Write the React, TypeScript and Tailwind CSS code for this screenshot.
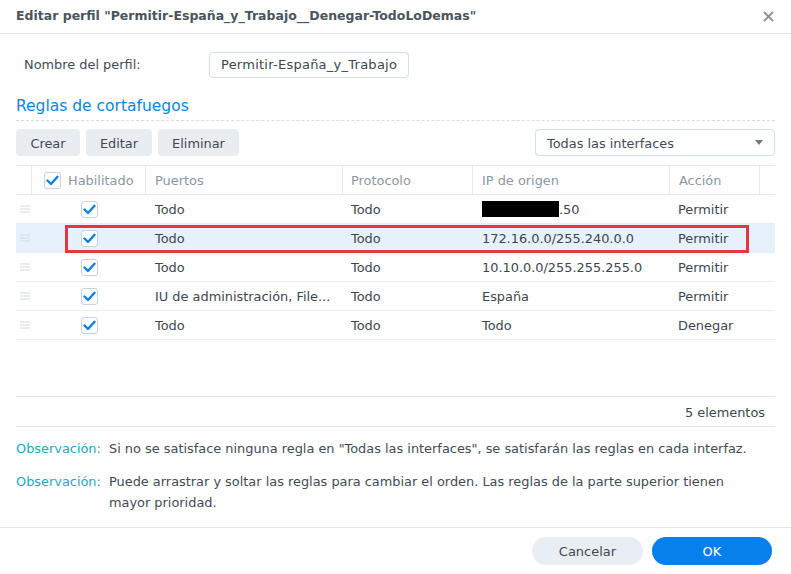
import React from "react";

const font = { fontFamily: '"DejaVu Sans", Verdana, sans-serif' };

function Check() {
  return (
    <span className="inline-flex h-[17px] w-[17px] items-center justify-center rounded-[3px] border border-[#c9d3de] bg-white">
      <svg width="13" height="11" viewBox="0 0 13 11">
        <path d="M1.5 5.5 L5 9 L11.5 1.8" fill="none" stroke="#0a7fe6" strokeWidth="2.4" strokeLinecap="round" strokeLinejoin="round" />
      </svg>
    </span>
  );
}

function Handle() {
  return (
    <svg width="10" height="8" viewBox="0 0 10 8">
      <path d="M0 1h10M0 4h10M0 7h10" stroke="#d3dae2" strokeWidth="1" />
    </svg>
  );
}

const rows = [
  { p: "Todo", pr: "Todo", ip: "redacted", a: "Permitir" },
  { p: "Todo", pr: "Todo", ip: "172.16.0.0/255.240.0.0", a: "Permitir", sel: true },
  { p: "Todo", pr: "Todo", ip: "10.10.0.0/255.255.255.0", a: "Permitir" },
  { p: "IU de administración, File...", pr: "Todo", ip: "España", a: "Permitir" },
  { p: "Todo", pr: "Todo", ip: "Todo", a: "Denegar" },
];

export default function App() {
  return (
    <div className="w-[791px] h-[574px] bg-white text-[12.9px] text-[#414b55] flex flex-col" style={font}>
      {/* title bar */}
      <div className="h-[34px] flex items-center justify-between pl-[16px] pr-[16px] border-b border-[#e3e8ee]">
        <span className="font-bold text-[12.5px] text-[#4a545e]">Editar perfil "Permitir-España_y_Trabajo__Denegar-TodoLoDemas"</span>
        <svg width="11" height="11" viewBox="0 0 11 11" className="mr-[1px]">
          <path d="M1 1L10 10M10 1L1 10" stroke="#8a939c" strokeWidth="1.8" />
        </svg>
      </div>

      <div className="flex-1 px-[16px] flex flex-col">
        {/* profile name */}
        <div className="flex items-center mt-[18px] h-[26px]">
          <span className="pl-[8px] w-[193px]">Nombre del perfil:</span>
          <div className="h-[26px] w-[200px] border border-[#d5dde6] rounded-[4px] flex items-center px-[11px] text-[#3c4650] text-[13px] tracking-[0.25px] whitespace-nowrap">
            Permitir-España_y_Trabajo
          </div>
        </div>

        <div className="mt-[18px] text-[15.5px] text-[#0a86e0] leading-[20px]">Reglas de cortafuegos</div>
        <div className="mt-[4px] border-b border-dashed border-[#d7dee6]" />

        {/* toolbar */}
        <div className="mt-[8px] flex items-center h-[27px]">
          <button className="h-[27px] w-[64px] pt-[2px] rounded-[4px] bg-[#e9edf2] text-[#3f4953]">Crear</button>
          <button className="ml-[6px] h-[27px] w-[66px] pt-[2px] rounded-[4px] bg-[#e9edf2] text-[#3f4953]">Editar</button>
          <button className="ml-[6px] h-[27px] w-[81px] pt-[2px] rounded-[4px] bg-[#e9edf2] text-[#3f4953]">Eliminar</button>
          <div className="ml-auto h-[27px] w-[240px] border border-[#d5dde6] rounded-[4px] flex items-center pl-[11px] pr-[11px] justify-between">
            <span className="pt-[2px]">Todas las interfaces</span>
            <svg width="8" height="5" viewBox="0 0 8 5"><path d="M0 0h8L4 5z" fill="#6f7882" /></svg>
          </div>
        </div>

        {/* table */}
        <div className="mt-[9px] border-t border-[#e3e8ee] w-[759px]">
          <div className="flex h-[29px] border-b border-[#e3e8ee] text-[#8b97a3]">
            <div className="w-[16px] border-r border-[#e6eaef]" />
            <div className="w-[114px] border-r border-[#e6eaef] flex items-center pl-[12px] gap-[7px]">
              <Check />
              <span className="pt-[2px]">Habilitado</span>
            </div>
            <div className="w-[197px] border-r border-[#e6eaef] flex items-center pl-[9px] pt-[2px]">Puertos</div>
            <div className="w-[130px] border-r border-[#e6eaef] flex items-center pl-[8px] pt-[2px]">Protocolo</div>
            <div className="w-[197px] border-r border-[#e6eaef] flex items-center pl-[9px] pt-[2px]">IP de origen</div>
            <div className="w-[90px] border-r border-[#e6eaef] flex items-center pl-[9px] pt-[2px]">Acción</div>
            <div className="flex-1" />
          </div>
          {rows.map((r, i) => (
            <div key={i} className={`relative flex h-[29px] border-b border-[#e8ecf0] ${r.sel ? "bg-[#e6f1fc]" : ""}`}>
              <div className="w-[16px] flex items-center justify-center pl-[2px]"><Handle /></div>
              <div className="w-[114px] flex items-center justify-center"><Check /></div>
              <div className="w-[197px] flex items-center pl-[9px] pt-[2px] text-[#3c4650] whitespace-nowrap">{r.p}</div>
              <div className="w-[130px] flex items-center pl-[8px] pt-[2px] text-[#3c4650]">{r.pr}</div>
              <div className="w-[197px] flex items-center pl-[9px] text-[#3c4650] whitespace-nowrap">
                {r.ip === "redacted" ? (
                  <>
                    <span className="inline-block w-[77px] h-[16px] bg-black" />
                    <span className="pt-[2px]">.50</span>
                  </>
                ) : (
                  <span className="pt-[2px]">{r.ip}</span>
                )}
              </div>
              <div className="w-[90px] flex items-center pl-[8px] pt-[2px] text-[#3c4650]">{r.a}</div>
              <div className="flex-1" />
              {r.sel && (
                <div className="absolute left-[49px] top-[1px] w-[684px] h-[28px] border-[3px] border-[#e8343c] pointer-events-none" />
              )}
            </div>
          ))}
          <div className="h-[57px] border-b border-[#dfe5eb]" />
          <div className="h-[29px] flex items-center justify-end pr-[10px] pt-[2px] text-[#3c4650]">5 elementos</div>
        </div>

        <div className="border-t border-[#dfe5eb] w-[759px]" />
        <div className="mt-[12px] flex leading-[20px] whitespace-nowrap">
          <span className="text-[#1fa6c1] w-[93px] shrink-0">Observación:</span>
          <span>Si no se satisface ninguna regla en "Todas las interfaces", se satisfarán las reglas en cada interfaz.</span>
        </div>
        <div className="mt-[12px] flex leading-[21px]">
          <span className="text-[#1fa6c1] w-[93px] shrink-0">Observación:</span>
          <span className="w-[655px]">Puede arrastrar y soltar las reglas para cambiar el orden. Las reglas de la parte superior tienen mayor prioridad.</span>
        </div>
      </div>

      {/* footer */}
      <div className="h-[47px] border-t border-[#e3e8ee] flex items-start justify-end pt-[9px] pr-[19px] gap-[9px]">
        <button className="h-[28px] w-[111px] rounded-full bg-[#e9eef5] text-[#3f4953] text-[13px] pt-[1px]">Cancelar</button>
        <button className="h-[28px] w-[120px] rounded-full bg-[#0880ec] text-white text-[13px] pt-[1px]">OK</button>
      </div>
    </div>
  );
}
